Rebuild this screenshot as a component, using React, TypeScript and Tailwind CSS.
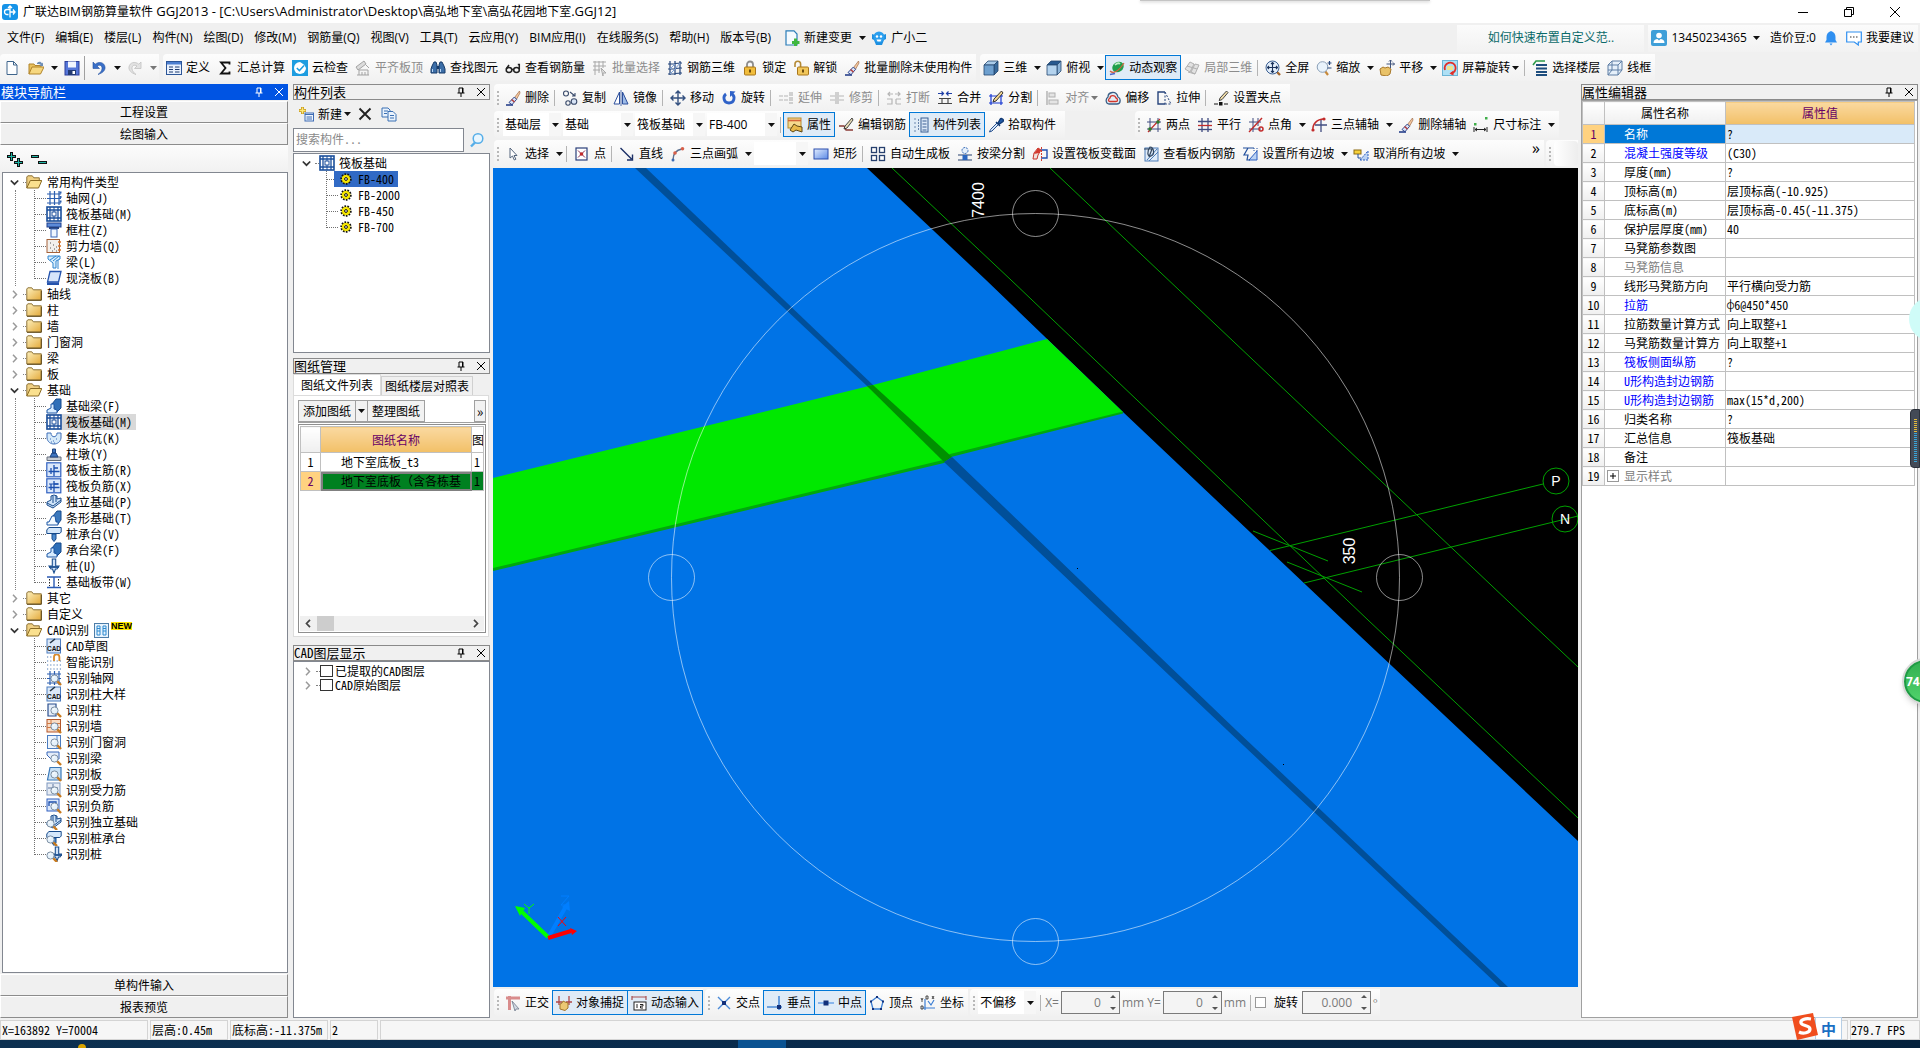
import React from 'react'

type IconName = keyof typeof icons

const magnifier = (
  <>
    <path d="M11 11l4 4" stroke="#c87a1e" strokeWidth="2.4" />
    <circle cx="8.5" cy="8.5" r="3.6" fill="#e6f2fb" stroke="#7d8fa3" />
    <path d="M6.8 8.2a2 2 0 0 1 2-1.6" stroke="#fff" fill="none" />
  </>
)

const brush = (
  <>
    <path d="M14.5 1l-5 6.5 2 1.8L15 3z" fill="#f4c9a0" stroke="#a06a48" strokeWidth=".7" />
    <path d="M9.4 7L4 12.5l3 2.2 4.6-5.4z" fill="#dbe4f7" stroke="#32498e" />
    <path d="M6.5 9.5l3 2.5" stroke="#b33b3b" strokeWidth="1.6" />
    <path d="M1 15h7" stroke="#27408b" strokeWidth="1.6" />
  </>
)

const slab = (
  <>
    <rect x="1" y="1" width="14" height="14" fill="#fff" stroke="#1b4f9c" strokeWidth="1.6" />
    <path d="M1 4h14M1 12h14M4 1v14M12 1v14" stroke="#1b4f9c" strokeWidth="1.3" />
    <rect x="6" y="6" width="4" height="4" fill="#fff" stroke="#1b4f9c" />
    <path d="M8 1v5M8 10v5" stroke="#1b4f9c" />
  </>
)

const beamShape = (
  <>
    <path d="M6 6l4-5h5v9l-4 4z" fill="#2f6fb8" stroke="#174a8b" />
    <path d="M1 15v-3l4-2V6h3v5l3 1v3z" fill="#d7ecff" stroke="#1d57a5" />
  </>
)

const pileCap = (
  <>
    <path d="M.8 4l2-2.5h12.4V6l-1.4 1.5H.8z" fill="#d4e7fb" stroke="#174a8b" />
    <path d="M6 8h4v5l-2 2.5L6 13z" fill="#4b8ad0" stroke="#174a8b" />
  </>
)

const pile = (
  <>
    <path d="M6.3 1h3.4v7H13l-2 3H9.500l-1.500 4L6.500 11H5L3 8h3.300z" fill="#cfe2f8" stroke="#1b4f8f" strokeWidth="1.1" />
    <path d="M3 9h10" stroke="#1b4f8f" strokeWidth="1.8" />
  </>
)

const footing = (
  <>
    <path d="M1 8l4-2v-4l3-1 3 1v3l4-1v4l-8 6-6-3z" fill="#cfe4f9" stroke="#184b8c" />
    <path d="M7 2v7M10 2v6M1 9l6 3 8-6" stroke="#184b8c" fill="none" />
  </>
)

const gridLines = <path d="M1 4h14M1 8.5h14M1 13h14M4 1v14M8.5 1v14M13 1v14" stroke="#2c5fb0" strokeWidth="1.2" />

const cube = (front: string, top: string, side: string) => (
  <>
    <path d="M1 5l4-4h10l-4 4z" fill={top} stroke="#24486e" strokeWidth=".8" />
    <path d="M11 5l4-4v10l-4 4z" fill={side} stroke="#24486e" strokeWidth=".8" />
    <path d="M1 5h10v10H1z" fill={front} stroke="#24486e" strokeWidth=".8" />
  </>
)

const rebarBox = (
  <>
    <rect x=".8" y=".8" width="14" height="14" fill="#dbe8fb" stroke="#2f5fc0" strokeWidth="1.2" />
    <path d="M2.5 9.5h11M8 3v11M8 6h4M5 6v6" stroke="#1b4fae" strokeWidth="1.3" fill="none" />
  </>
)

const icons = {
  newFile: <path d="M3 1.5h6.5L13 5v9.5H3zM9.5 1.5V5H13" fill="#fdfeff" stroke="#3f658c" />,
  open: (
    <>
      <path d="M1 14V4h5l1 1.5h6V8" fill="#e9c15c" stroke="#b1842b" />
      <path d="M1 14l3-7h12l-3.5 7z" fill="#f6d77f" stroke="#b1842b" />
      <path d="M9 3c2-2 4-1.5 5 .5l1-1V6h-3.5l1.2-1.2c-1-1-2-1-3.7-.8z" fill="#6d8db5" />
    </>
  ),
  save: (
    <>
      <rect x="1" y="1.5" width="14" height="13.5" fill="#5576d9" stroke="#2d3f9a" />
      <rect x="4" y="1.5" width="8" height="6" fill="#f2f6ff" />
      <rect x="4" y="10" width="8" height="5" fill="#233a72" />
      <rect x="8.5" y="11" width="2.5" height="3" fill="#fff" />
    </>
  ),
  undo: <path d="M2 2v6.5h6.5L6 6c3-2 5.500 0 5 3-.3 2-2 4-4 5.500C12 13 14.500 10 14 7 13.500 2.500 8 1 4.200 4.200z" fill="#3a70c8" stroke="#24519f" strokeWidth=".6" />,
  redo: <path d="M14 2v6.5H7.500L10 6C7 4 4.500 6 5 9c.3 2 2 4 4 5.500C4 13 1.500 10 2 7c.5-4.500 6-6 9.800-2.800z" fill="#e2e2e2" stroke="#c2c2c2" strokeWidth=".8" />,
  define: (
    <>
      <rect x=".5" y="1.5" width="15" height="13" fill="#e9f1fd" stroke="#2c5698" />
      <rect x="1" y="2" width="14" height="2.5" fill="#4d7fd0" />
      <path d="M3 7h4M3 9.5h4M3 12h4M9 7h4.5M9 9.5h4.5M9 12h4.5" stroke="#1f3c70" />
    </>
  ),
  sigma: <path d="M12.5 4.5v-2H4L8.5 8 4 13.5h8.500v-2" fill="none" stroke="#111" strokeWidth="1.8" />,
  cloud: (
    <>
      <rect width="16" height="16" fill="#1e9de0" />
      <path d="M8 2a6 6 0 1 0 6 6c-1-3-4-5-6-6z" fill="#fff" />
      <path d="M4.800 8l2.600 2.600 4.600-5" stroke="#1e9de0" strokeWidth="1.5" fill="none" />
    </>
  ),
  alignTop: (
    <>
      <path d="M1 7l8-6 2 3-8 6z" fill="#dcdcdc" stroke="#a3a3a3" />
      <path d="M4 15V10h9v5M7 15v-3M10 15v-3M2 15h12M11 5l3 3" stroke="#a3a3a3" fill="none" />
    </>
  ),
  binoculars: (
    <>
      <path d="M2 6l2-4h2l1 3v8H1V9zM14 6l-2-4h-2L9 5v8h6V9z" fill="#3c6ea8" stroke="#173b68" />
      <path d="M7 6h2v3H7z" fill="#173b68" />
      <path d="M2.5 12V9M10.500 12V9" stroke="#b9d6f5" />
    </>
  ),
  glasses: (
    <g fill="none" stroke="#222" strokeWidth="1.5">
      <ellipse cx="4" cy="10" rx="2.800" ry="2.400" />
      <ellipse cx="11.500" cy="10" rx="2.800" ry="2.400" />
      <path d="M6.800 9.500h2M1.200 9L4 5M14.300 9V4.500h-1.500" />
    </g>
  ),
  batchSelect: (
    <g stroke="#a8a8a8" fill="none">
      <path d="M1 2h13M1 6h13M1 10h7M3 1v14M7 1v12M11 1v7" />
      <path d="M9 8l5 5h-3v3z" fill="#e4e4e4" />
    </g>
  ),
  rebar3d: (
    <g stroke="#23447a" fill="none">
      <path d="M3 1v14M8 1v14M13 1v14M1 4l14-1M1 9l14-1M1 14l14-1" strokeWidth="1.2" />
      <path d="M3 14l5-5 5-6M3 9l5-5" stroke="#7ba1d8" />
    </g>
  ),
  lock: (
    <>
      <path d="M5 7V4.500a3 3 0 0 1 6 0V7" fill="none" stroke="#8d8d8d" strokeWidth="1.8" />
      <rect x="2.5" y="7" width="11" height="8" rx="1" fill="#f1bd3c" stroke="#a9761a" />
      <path d="M8 9.500v3" stroke="#5e3f08" strokeWidth="1.8" />
    </>
  ),
  unlock: (
    <>
      <path d="M2 7V4a2.800 2.800 0 0 1 5.600 0v3" fill="none" stroke="#b48a35" strokeWidth="1.6" />
      <rect x="4.5" y="7" width="11" height="8" rx="1" fill="#f1c65a" stroke="#a9761a" />
      <path d="M10 9.500v3" stroke="#5e3f08" strokeWidth="1.8" />
    </>
  ),
  brush,
  cube: cube('#6ea0cf', '#a9cbe9', '#386a9c'),
  cubeTop: cube('#b4d3ee', '#27598f', '#8cb4d9'),
  orbit: (
    <>
      <ellipse cx="9" cy="7" rx="6" ry="5" fill="#1f9f4c" transform="rotate(-35 9 7)" />
      <path d="M6 5c2-2 4-2 5-1" stroke="#bff0c8" strokeWidth="1.6" fill="none" />
      <path d="M1 11c3 3 8 1 14-8" stroke="#d4603a" strokeWidth="1.2" fill="none" />
      <path d="M1 14.500l5-1" stroke="#4b66c9" strokeWidth="1.4" />
    </>
  ),
  localCube: (
    <g fill="#e2e2e2" stroke="#b0b0b0">
      <path d="M1 9l5-7 4 2-4 8zM7 12l4-8 4 1-4 9zM3 6l10 3M4 12l7 2" />
    </g>
  ),
  fit: (
    <>
      <path d="M12 12l3 3" stroke="#a3652b" strokeWidth="2.4" />
      <circle cx="7.5" cy="7.5" r="6.5" fill="#e4effb" stroke="#3b5f92" />
      <path d="M7.500 2.500v10M2.500 7.500h10M6 4l1.500-1.500L9 4M6 11l1.500 1.500L9 11M4 6L2.500 7.500 4 9M11 6l1.500 1.500L11 9" stroke="#1c335c" fill="none" strokeWidth="1.1" />
    </>
  ),
  zoom: (
    <>
      <path d="M9 11l3 4" stroke="#c88a3b" strokeWidth="2.2" />
      <circle cx="6.5" cy="7" r="5.3" fill="#e9f3fc" stroke="#8ba0b8" />
      <path d="M13.500 1v4M11.500 3h4M11.500 8h4" stroke="#28497e" strokeWidth="1.2" />
    </>
  ),
  pan: (
    <>
      <path d="M2 15l-1-6 3-2 2 1 3-1 3 2-1 5-3 2z" fill="#e9c268" stroke="#a8792b" />
      <path d="M11.500 0v8M7.500 4h8M10 1.500L11.500 0 13 1.500M14 2.500L15.500 4 14 5.500" stroke="#40547c" fill="none" />
    </>
  ),
  screenRotate: (
    <>
      <rect x=".5" y=".5" width="15" height="15" fill="#aee0f5" stroke="#6cb5d6" />
      <path d="M3 10a5.500 5.500 0 1 1 6 3.500" stroke="#e02e28" strokeWidth="1.8" fill="none" />
      <rect x="5" y="6" width="6" height="4" fill="#f1e28b" />
      <path d="M11.500 10.500l-4 3 4 2z" fill="#e02e28" />
    </>
  ),
  floors: (
    <>
      <path d="M4 5h11M4 8.500h11M4 12h11M4 15h11" stroke="#1e4e7e" strokeWidth="1.8" />
      <path d="M1 5l3-4h9" stroke="#2d9a4a" strokeWidth="1.6" fill="none" />
    </>
  ),
  wire: (
    <g fill="#e6f0fa" stroke="#5f7fa5">
      <path d="M1 5l4-4h10v9l-4 5H1z" />
      <path d="M1 5h10v10M11 5l4-4M5 1v9H1M5 10h10M5 10l-4 5" fill="none" />
    </g>
  ),
  copy: (
    <g fill="none" stroke="#3a4b6b" strokeWidth="1.1">
      <circle cx="4" cy="3.5" r="2.5" />
      <circle cx="12" cy="11.5" r="2.8" fill="#d8e4f6" />
      <circle cx="6" cy="13" r="2.2" />
      <path d="M8 2l5 4M13 3v3h-3" />
    </g>
  ),
  mirror: (
    <>
      <path d="M6.500 2v12H1z" fill="#fff" stroke="#2c4f9c" />
      <path d="M9.500 2v12H15z" fill="#9dbbe8" stroke="#2c4f9c" />
      <path d="M8 0v16" stroke="#2c4f9c" strokeWidth=".8" />
    </>
  ),
  move: <path d="M8 1v14M1 8h14M5.500 3.500L8 1l2.500 2.500M5.500 12.500L8 15l2.500-2.500M3.500 5.500L1 8l2.500 2.500M12.500 5.500L15 8l-2.500 2.500" stroke="#33507f" strokeWidth="1.4" fill="none" />,
  rotate: (
    <>
      <path d="M5 4C1.500 6.500 2.500 13 8 13s6.500-6.500 3-9" stroke="#2f62c8" strokeWidth="2.8" fill="none" />
      <path d="M14.500 1.500L9 1v6z" fill="#2f62c8" />
    </>
  ),
  extend: <path d="M1 6h9M1 10h9M12 2v12M14 2v12" stroke="#b5b5b5" strokeWidth="1.2" strokeDasharray="4 1" />,
  trim: <path d="M1 6h5M1 10h5M10 6h5M10 10h5M7 2v12M9 2v12" stroke="#b5b5b5" strokeWidth="1.2" />,
  breakAt: <path d="M2 4h5M9 4h5M4 2L2 4l2 2M12 2l2 2-2 2M1 9h5v5H1M10 9h5M10 14h5M10 9v5" stroke="#b5b5b5" strokeWidth="1.2" fill="none" />,
  merge: (
    <>
      <path d="M1 3.500h5M10 3.500h5M4.500 1.500l2 2-2 2M11.500 1.500l-2 2 2 2" stroke="#1f3fa6" strokeWidth="1.2" fill="none" />
      <path d="M2 8.500h12M5 8.500v5M11 8.500v5M1 13.500h14" stroke="#444" strokeWidth="1.1" />
    </>
  ),
  split: (
    <>
      <path d="M1 6h14M1 13h14M3 4v11M13 4v11" stroke="#1737d2" strokeWidth="1.2" />
      <path d="M13.500 1L6 9l-1 3 3-1 7-8z" fill="#f1d491" stroke="#222" strokeWidth=".9" />
    </>
  ),
  align: (
    <g stroke="#b0b0b0" fill="#e4e4e4">
      <path d="M2 1v14" strokeWidth="1.4" />
      <rect x="4" y="3" width="6" height="4" />
      <rect x="4" y="10" width="9" height="4" />
    </g>
  ),
  offset: (
    <g fill="none">
      <path d="M4 14c-3 0-4-5-1-7 0-5 8-7 10 0 3 1 3 7-1 7z" stroke="#3a5f86" strokeWidth="1.3" fill="#e4edf5" />
      <path d="M5 11.500c-2 0-2-2.500 0-3.500 0-3 5-3.500 6 0 2 .5 2 3.500 0 3.500z" stroke="#d2352a" strokeWidth="1.3" />
    </g>
  ),
  stretch: (
    <>
      <path d="M9 2H2v12h7" stroke="#27447c" strokeWidth="1.4" fill="none" />
      <path d="M9 2v12M9 2l6 12H9" stroke="#27447c" strokeDasharray="2 1.5" fill="none" />
    </>
  ),
  grips: (
    <>
      <path d="M1 14h4M11 14h4" stroke="#111" strokeWidth="1.2" />
      <rect x="6" y="12" width="3.5" height="3.5" fill="#111" />
      <path d="M13.500 1L7 8l-.8 2.600L9 9.600l6-7z" fill="#f0dca8" stroke="#333" strokeWidth=".9" />
    </>
  ),
  props: (
    <>
      <rect x="1" y="1" width="13" height="10" fill="#f5d98e" stroke="#b98a2a" />
      <path d="M1 3.500h13" stroke="#d5633a" strokeWidth="1.6" />
      <path d="M3 13l4-6 3 2 5 1v5l-6-2-3 2z" fill="#e8b94b" stroke="#5e4714" />
    </>
  ),
  editRebar: (
    <>
      <path d="M1 9h5l2 4h7" stroke="#8a3a35" strokeWidth="1.3" fill="none" />
      <path d="M14 1L7 9l-1 3 3-1 6-8z" fill="#e9ddb8" stroke="#333" strokeWidth=".9" />
    </>
  ),
  listPane: (
    <>
      <rect x="8" y="1" width="7" height="14" fill="#dce8f7" stroke="#3a5f92" />
      <path d="M9.500 4h4M9.500 7h4M9.500 10h4M9.500 13h4" stroke="#3a5f92" />
      <path d="M1 2h3M1 6h3M1 10h3M1 14h3M5.500 2v12" stroke="#6b87ae" strokeDasharray="2 1" />
    </>
  ),
  picker: (
    <>
      <path d="M9 6L2.500 12.500 1.500 15l2.500-1 6.500-6.500" fill="#d5e6fa" stroke="#27508e" />
      <path d="M8 5l4 4M10 6l2-3.500a1.800 1.800 0 0 1 3 2L11.500 7z" fill="#225ca8" stroke="#123a74" strokeWidth="1.4" />
    </>
  ),
  twoPoint: (
    <>
      <path d="M1 5h14M1 12h14M4 1v14M12 1v14" stroke="#404c80" />
      <path d="M2 15L14 2" stroke="#c22b2b" strokeWidth="1.2" />
      <circle cx="12" cy="5" r="1.8" fill="#2c7a2c" />
      <circle cx="4" cy="12" r="1.8" fill="#2c7a2c" />
    </>
  ),
  parallel: (
    <>
      <path d="M5 1v14M11 1v14M1 4.500h14" stroke="#404c80" strokeWidth="1.3" />
      <path d="M1 8.500h14" stroke="#c22b2b" strokeWidth="1.3" />
      <path d="M1 12.500h14" stroke="#404c80" strokeWidth="1.3" />
    </>
  ),
  pointAngle: (
    <>
      <path d="M1 5h12M1 12h12M5 1v14M10 1v8" stroke="#404c80" />
      <path d="M1 15L14 1" stroke="#c22b2b" strokeWidth="1.4" />
      <circle cx="13" cy="12" r="2" fill="none" stroke="#c22b2b" strokeWidth="1.5" />
    </>
  ),
  arcAxis: (
    <>
      <path d="M4 8h12M10 3v12" stroke="#404c80" strokeWidth="1.3" />
      <path d="M2 14C1 7 6 2 13 2" stroke="#c22b2b" strokeWidth="1.5" fill="none" />
      <circle cx="2" cy="13" r="1.6" fill="#c22b2b" />
      <circle cx="13" cy="2" r="1.6" fill="#c22b2b" />
    </>
  ),
  dim: (
    <>
      <path d="M1 10v5M14 10v5M2 12.500h11M4 11l-2 1.500L4 14M11 11l2 1.500-2 1.500" stroke="#222" fill="none" />
      <rect x="1" y="6" width="2.5" height="2.5" fill="#3fae49" />
      <rect x="12" y="0" width="2.5" height="2.5" fill="#3fae49" />
    </>
  ),
  cursor: <path d="M5 2v10l2.500-2 1.800 4 1.600-.8L9 9.500h3z" fill="#fff" stroke="#55657c" />,
  point: (
    <>
      <rect x="2" y="2" width="11" height="12" fill="#fff" stroke="#2a3f7a" strokeWidth="1.2" />
      <path d="M4 4.500l7 7M11 4.500l-7 7" stroke="#8a2a50" />
      <circle cx="7.5" cy="8" r="1.8" fill="#c22b2b" />
    </>
  ),
  line: <path d="M1.500 2l11 11M13.500 8.500v5.500H8" stroke="#1b2f66" strokeWidth="1.4" fill="none" />,
  arc: (
    <>
      <path d="M3 14C3 8 6 4 12 3" stroke="#5c7190" strokeWidth="1.4" fill="none" />
      <circle cx="12.5" cy="2.8" r="1.8" fill="#d7604a" />
      <circle cx="5" cy="7" r="1.8" fill="#d7604a" />
      <circle cx="3" cy="14" r="1.5" fill="#3a68b0" />
    </>
  ),
  rect: (
    <>
      <defs>
        <linearGradient id="rectFill" x1="0" y1="0" x2="1" y2="1">
          <stop offset="0" stopColor="#e2edff" />
          <stop offset="1" stopColor="#5c8ae6" />
        </linearGradient>
      </defs>
      <rect x="1" y="3" width="14" height="10" fill="url(#rectFill)" stroke="#2c4fae" />
    </>
  ),
  autoSlab: (
    <g fill="#fff" stroke="#27406e" strokeWidth="1.3">
      <rect x="1.5" y="1.5" width="5" height="5" />
      <rect x="9.5" y="1.5" width="5" height="5" />
      <rect x="1.5" y="9.5" width="5" height="5" />
      <rect x="9.5" y="9.5" width="5" height="5" />
    </g>
  ),
  beamSplit: (
    <>
      <circle cx="8" cy="4.5" r="3" fill="#e6f0fb" stroke="#2e65b5" strokeDasharray="2 1" />
      <path d="M1 9h14M1 14h14" stroke="#27406e" strokeWidth="1.2" />
      <rect x="5.5" y="9" width="5" height="5" fill="#2b66c0" />
    </>
  ),
  section: (
    <>
      <path d="M9 4h6v8H9" fill="none" stroke="#1f4db0" strokeWidth="1.4" />
      <path d="M9.500 1v14" stroke="#d43a2f" strokeDasharray="2 1" />
      <path d="M1 13l1-6 4-5 3 2-3 5-1 4z" fill="#f0e3dd" stroke="#c8352c" />
      <path d="M2 8l4-6 3 2-2 3z" fill="#d43a2f" />
    </>
  ),
  viewRebar: (
    <>
      <rect x="2" y="2" width="13" height="13" fill="#e0ebf8" stroke="#4c7db8" />
      <path d="M4 14L14 3M6 15l9-9" stroke="#4c7db8" />
      <path d="M1 3h8l-3 8M7 1c4 0 5 8 1 9S4 5 7 1z" fill="none" stroke="#33475f" strokeWidth="1.2" />
    </>
  ),
  slopeSet: (
    <>
      <path d="M7 14h8V5z" fill="#bcd3f3" stroke="#2c5ec0" />
      <path d="M1 2h11M6 2L2 9h4l-1 5h3" stroke="#214f9c" strokeWidth="1.2" fill="none" />
      <path d="M12 2v3M15 2v3" stroke="#214f9c" strokeDasharray="1 1" />
    </>
  ),
  slopeClear: (
    <>
      <path d="M7 14h8V5z" fill="#bcd3f3" stroke="#2c5ec0" strokeDasharray="2 1" />
      <rect x="1" y="4" width="7" height="4" fill="#f6d13a" stroke="#8b6b12" />
      <path d="M5 8v4h3" stroke="#214f9c" fill="none" />
    </>
  ),
  ortho: (
    <>
      <path d="M1 3h14M4.500 1v14" stroke="#d98c8c" strokeWidth="3" />
      <path d="M7 6l7 8h-3l-1 2z" fill="#d3dae4" stroke="#7a8494" strokeWidth=".9" />
    </>
  ),
  snap: (
    <>
      <path d="M3 1v9M13 1v9M0 7h6M10 7h6" stroke="#b04848" strokeWidth="1.3" />
      <path d="M4 14V9l2-1 1-2 2 1 3 1v5l-3 2.500z" fill="#ecc873" stroke="#a3752a" />
    </>
  ),
  dynInput: (
    <>
      <path d="M1 2h14M1 1v4M15 1v4" stroke="#a85050" strokeWidth="1.2" />
      <rect x="3" y="7" width="12" height="8" fill="#fff" stroke="#222" />
      <path d="M6 9v4M9 9.500h3v1.600H9.500V13H12" stroke="#222" fill="none" />
    </>
  ),
  cross: (
    <>
      <path d="M2 2l12 12M14 2L2 14" stroke="#4a8ad8" strokeWidth="1.4" />
      <rect x="6" y="6" width="4" height="4" fill="#12307a" />
    </>
  ),
  perp: (
    <>
      <path d="M0 12h15M12 1v14" stroke="#4a8ad8" strokeWidth="1.6" />
      <rect x="10" y="10" width="4" height="4" fill="#12307a" />
    </>
  ),
  mid: (
    <>
      <path d="M0 8h16" stroke="#7fb0ea" strokeWidth="1.8" />
      <rect x="5.5" y="5.5" width="5" height="5" fill="#12307a" />
    </>
  ),
  vertex: (
    <>
      <path d="M8 2l6 4.500-2 7.500H4L2 6.500z" fill="none" stroke="#3d7fd4" strokeWidth="1.3" />
      <path d="M7 1h2v2H7zM13 5.500h2v2h-2zM1 5.500h2v2H1zM3 13h2v2H3zM11 13h2v2h-2z" fill="#12307a" />
    </>
  ),
  coord: (
    <>
      <path d="M5 4v11M3 13h12M8 6l3 4 3-5" stroke="#3d7fd4" strokeWidth="1.2" fill="none" />
      <path d="M1 3l1 2 1-2M2 5v2M1 11h2v3H1zM6 1h2v3H6zM12 1l2 3M14 1l-2 3" stroke="#222" strokeWidth=".8" fill="none" />
    </>
  ),
  folder: (
    <>
      <defs>
        <linearGradient id="folderFill" x1="0" y1="0" x2="1" y2="1">
          <stop offset="0" stopColor="#fdf0bd" />
          <stop offset="1" stopColor="#e3a93a" />
        </linearGradient>
      </defs>
      <path d="M.8 14V3l1-1.200h4l1.500 2h8v10.200z" fill="url(#folderFill)" stroke="#8e7238" />
      <path d="M1 14.300h14.300V5" stroke="#5f4a1c" fill="none" />
    </>
  ),
  folderOpen: (
    <>
      <path d="M.8 14V3l1-1.200h4.500l1.500 2h5.500V7" fill="#f0d083" stroke="#8e7238" />
      <path d="M.8 14l3.500-7.500h11.500L12.500 14z" fill="#fae08e" stroke="#8a6a22" />
    </>
  ),
  axisGrid: (
    <>
      {gridLines}
      <path d="M13.500 2.500h2M13.500 7h2M13.500 11.500h2" stroke="#2c5fb0" strokeWidth="2" />
    </>
  ),
  slab,
  column: (
    <>
      <rect x="1" y="1" width="14" height="4" fill="#5b8ad8" stroke="#1f3f8c" />
      <path d="M3 5h10v2H3z" fill="#24407c" />
      <rect x="5" y="7" width="6" height="8" fill="#eef5ff" stroke="#3a66b8" />
    </>
  ),
  wall: (
    <>
      <rect x="1" y="1.5" width="12.5" height="13" fill="#f3f0ec" stroke="#a5623a" />
      <path d="M12 4h3M12 8h3M12 12h3" stroke="#d77428" strokeWidth="1.6" />
      <path d="M4 5h1M7 7h1M4 10h1M8 11h1M6 13h1M10 9h1M10 13h1" stroke="#555" />
    </>
  ),
  beam: (
    <g stroke="#2f84cf" fill="#d6ecfb">
      <path d="M2 2h12v3l-4 2v7H7V9L2 5zM7 7l6-5M4 6l6-4" />
      <path d="M12 6v9" />
    </g>
  ),
  plate: (
    <>
      <path d="M4 1.500h11L12.500 12H1.500z" fill="#d7e5fa" stroke="#2453ad" strokeWidth="1.3" />
      <path d="M1 12.500h12v2.500H1z" fill="#2453ad" />
    </>
  ),
  foundationBeam: beamShape,
  pit: (
    <>
      <path d="M1 3h4c0 5 6 5 6 0h4v5c-1 8-13 8-14 0z" fill="#d6eafa" stroke="#3f6fb8" />
      <path d="M4 9h1M7 11h1M10 9h1M8 13h1M5 12h1" stroke="#3f6fb8" />
    </>
  ),
  pier: (
    <>
      <path d="M1 11h14v3.500H1z" fill="#c8cdd4" stroke="#666f7c" />
      <path d="M4 11l2-4h4l2 4zM6.500 7V3h3v4z" fill="#3e74bf" stroke="#1c437f" />
    </>
  ),
  rebarMain: rebarBox,
  rebarNeg: (
    <>
      {rebarBox}
      <path d="M3 6h10" stroke="#1b4fae" />
    </>
  ),
  footing,
  strip: (
    <>
      <path d="M7 6l4-5h4v9l-3 4z" fill="#3b78bd" stroke="#174a8b" />
      <path d="M1 15v-3h2l3-6h3l1 6h2v3z" fill="#f4faff" stroke="#1d57a5" />
    </>
  ),
  pileCap,
  pile,
  band: (
    <>
      <path d="M1 3h14M1 13.500h14M8 3v10" stroke="#2b5bb4" strokeWidth="1.4" />
      <path d="M3.500 5v7M12.500 5v7" stroke="#222" strokeDasharray="1.5 1.5" />
    </>
  ),
  cad: (
    <>
      <rect x="1" y="1" width="13.5" height="14" fill="#dbe8f8" stroke="#4b7cc0" />
      <path d="M4 5l5-4" stroke="#234" strokeWidth="1.6" />
      <text x="8" y="12.5" fontSize="6.5" fontWeight="700" fontFamily="Liberation Sans, sans-serif" textAnchor="middle" fill="#111">CAD</text>
    </>
  ),
  smart: (
    <>
      <path d="M1 3h6M1 7h14M1 11h14M1 15h14" stroke="#4d78b5" strokeWidth="1.2" strokeDasharray="1.2 2" />
      <path d="M8 7V3a2.700 2.700 0 0 1 5.400 0v4" stroke="#d98a2a" strokeWidth="1.8" fill="none" />
    </>
  ),
  idGrid: (
    <>
      {gridLines}
      {magnifier}
    </>
  ),
  idColumn: (
    <>
      <path d="M2 2h8v12H2z" fill="#e4edf9" stroke="#2b4f8e" strokeWidth="1.2" />
      {magnifier}
    </>
  ),
  idWall: (
    <>
      <rect x="1" y="1.5" width="13.5" height="12.5" fill="#f9dcc4" stroke="#b3562a" />
      <path d="M1 5.500h13M1 9.500h13M5 1.500v4M10 5.500v4" stroke="#d07a45" />
      {magnifier}
    </>
  ),
  idDoor: (
    <>
      <rect x="1.5" y="1.5" width="13" height="13" fill="#eef5fc" stroke="#4b7cc0" />
      <path d="M11 2v12" stroke="#9fc0e8" strokeWidth="2" />
      {magnifier}
    </>
  ),
  idBeam: (
    <>
      <path d="M1 2h12v7H5L1 5z" fill="#e4edf9" stroke="#3766b8" />
      {magnifier}
    </>
  ),
  idPlate: (
    <>
      <path d="M4 1.500h11v12.500H1.500z" fill="#c9e2f7" stroke="#3a78b8" strokeWidth="1.2" />
      {magnifier}
    </>
  ),
  idRebar: (
    <>
      <rect x="1" y="1" width="13" height="12" fill="#e7ecf4" stroke="#7c95bd" />
      <path d="M2 6h10M7 2v8" stroke="#5c76a3" />
      {magnifier}
    </>
  ),
  idNeg: (
    <>
      <rect x="1" y="1" width="12" height="12" fill="#dbe8fb" stroke="#2f5fc0" />
      <path d="M3 8V4h7v4" stroke="#1b4fae" fill="none" strokeWidth="1.3" />
      {magnifier}
    </>
  ),
  idFooting: (
    <>
      {footing}
      <g transform="translate(-4 1)">{magnifier}</g>
    </>
  ),
  idCap: (
    <>
      {pileCap}
      <g transform="translate(-4 1)">{magnifier}</g>
    </>
  ),
  idPile: (
    <>
      <g transform="translate(3 0)">{pile}</g>
      <g transform="translate(-4 1)">{magnifier}</g>
    </>
  ),
  gear: (
    <>
      <circle cx="8" cy="8" r="4.6" fill="#f5e600" stroke="#111" strokeWidth="2.2" strokeDasharray="1.6 1.2" />
      <circle cx="8" cy="8" r="4" fill="#f5e600" />
      <circle cx="8" cy="8" r="1.4" fill="#fff" stroke="#111" />
    </>
  ),
  create: (
    <>
      <path d="M4.500 1v7M1 4.500h7" stroke="#c69a1c" strokeWidth="3" />
      <path d="M4.500 1.500v6M1.500 4.500h6" stroke="#ffe877" strokeWidth="1.4" />
      <rect x="7" y="7" width="8.5" height="8" fill="#eef4fd" stroke="#3f6cb5" />
      <path d="M7 8.500h8.500M8.500 11h5.500M8.500 13h5.500" stroke="#3f6cb5" />
    </>
  ),
  remove: <path d="M2.500 2.500l11 11M13.500 2.500l-11 11" stroke="#222" strokeWidth="1.9" />,
  duplicate: (
    <g fill="#e9f2fc" stroke="#3b70b4">
      <path d="M1 2h6l2 2v7H1z" />
      <path d="M7 5.500h5l3 3V15H7zM9 9.500h4M9 12h4M3 5h4M3 7.500h3" />
    </g>
  ),
  search: (
    <>
      <path d="M6 10.500L2 14.500" stroke="#56aee8" strokeWidth="2.4" />
      <circle cx="9" cy="6.5" r="4.8" fill="#e8f6ff" stroke="#56aee8" strokeWidth="1.5" />
    </>
  ),
  change: (
    <>
      <path d="M2 .8h8L13 4v11H2z" fill="#f5fafe" stroke="#2b7db8" strokeWidth="1.2" />
      <path d="M10 8.500h3v2.500h2.500v3H13V16h-3v-2H8v-3h2z" fill="#3fb73f" />
    </>
  ),
  robot: (
    <>
      <path d="M1 4l3 1h8l3-1v5l-2 1-2 5H5l-2-5-2-1z" fill="#1d8fe0" />
      <circle cx="8" cy="7" r="5.5" fill="#2c9fee" />
      <circle cx="6" cy="6.5" r="1.2" fill="#fff" />
      <circle cx="10" cy="6.5" r="1.2" fill="#fff" />
      <path d="M5.500 9.500h5l-1 2h-3z" fill="#fff" />
    </>
  ),
  user: (
    <>
      <rect width="16" height="16" rx="2" fill="#3f9fd8" />
      <circle cx="8" cy="5.5" r="2.8" fill="#fff" />
      <path d="M2.500 13c0-3 2-4 4-4l1.500 1.500L9.500 9c2 0 4 1 4 4z" fill="#fff" />
    </>
  ),
  bell: (
    <>
      <path d="M8 1c3 1 4.500 3 4.500 6v3l1.500 2.500H2L3.500 10V7C3.500 4 5 2 8 1z" fill="#2f8ff0" />
      <path d="M6.500 13.500h3L8 15.500z" fill="#2f8ff0" />
    </>
  ),
  feedback: (
    <>
      <path d="M.7 2h14.600v10h-3v3l-4-3H.7z" fill="#fff" stroke="#2f8ff0" strokeWidth="1.2" />
      <path d="M4 7h8" stroke="#333" strokeWidth="1.2" strokeDasharray="1.5 1.5" />
    </>
  ),
}

const Icon: React.FC<{ name: IconName }> = ({ name }) => (
  <svg viewBox="0 0 16 16" className="h-4 w-4 shrink-0" fill="none" aria-hidden="true">
    {icons[name]}
  </svg>
)

const Caret: React.FC<{ muted?: boolean }> = ({ muted }) => (
  <svg viewBox="0 0 7 4" className="h-1 w-[7px] shrink-0" aria-hidden="true">
    <path d="M0 0h7L3.5 4z" fill={muted ? '#777' : '#111'} />
  </svg>
)

interface ToolItem {
  label: string
  icon?: IconName
  active?: boolean
  disabled?: boolean
  arrow?: 'wide' | 'narrow'
  sep?: boolean
}

const Tool: React.FC<ToolItem> = ({ label, icon, active, disabled, arrow, sep }) => (
  <>
    <button
      type="button"
      disabled={disabled}
      className={`-ml-px flex h-[25px] shrink-0 items-center gap-1 border px-[3px] whitespace-nowrap ${
        active ? 'relative border-[#0078d7] bg-[#dfebf7]' : 'border-transparent'
      } ${disabled ? 'text-[#8c8c8c]' : ''}`}
    >
      {icon && <Icon name={icon} />}
      {label}
      {arrow === 'narrow' && <span className="-ml-0.5"><Caret muted={disabled} /></span>}
    </button>
    {arrow === 'wide' && (
      <button type="button" aria-label={`${label} 选项`} className="flex h-[25px] w-3 shrink-0 items-center justify-center">
        <Caret />
      </button>
    )}
    {sep && <span className="mr-1 ml-px h-4 w-px shrink-0 bg-[#b4b4b4]" />}
  </>
)

const Grip: React.FC = () => (
  <svg viewBox="0 0 2 14" className="mr-[3px] ml-[3px] h-[14px] w-[2px] shrink-0" aria-hidden="true">
    <path d="M0 0h2v2H0zM0 4h2v2H0zM0 8h2v2H0zM0 12h2v2H0z" fill="#b8b8b8" />
  </svg>
)

const Group: React.FC<{ children: React.ReactNode; className?: string }> = ({ children, className = '' }) => (
  <div className={`flex h-[27px] shrink-0 items-center rounded-l-sm bg-gradient-to-b from-[#fdfdfd] to-[#f1f1f1] ${className}`}>
    {children}
  </div>
)

const Combo: React.FC<{ label: string; value: string; className: string }> = ({ label, value, className }) => (
  <span className={`relative flex h-[23px] shrink-0 items-center bg-white ${className}`}>
    <select aria-label={label} className="h-full w-full appearance-none bg-transparent pl-0.5 outline-none">
      <option>{value}</option>
    </select>
    <span className="pointer-events-none absolute right-0 flex h-full w-3 items-center justify-center bg-[#f6f6f6]">
      <Caret />
    </span>
  </span>
)

const menus = [
  '文件(F)', '编辑(E)', '楼层(L)', '构件(N)', '绘图(D)', '修改(M)', '钢筋量(Q)', '视图(V)',
  '工具(T)', '云应用(Y)', 'BIM应用(I)', '在线服务(S)', '帮助(H)', '版本号(B)',
]

const mainTools: ToolItem[] = [
  { label: '定义', icon: 'define' },
  { label: '汇总计算', icon: 'sigma' },
  { label: '云检查', icon: 'cloud' },
  { label: '平齐板顶', icon: 'alignTop', disabled: true },
  { label: '查找图元', icon: 'binoculars' },
  { label: '查看钢筋量', icon: 'glasses' },
  { label: '批量选择', icon: 'batchSelect', disabled: true },
  { label: '钢筋三维', icon: 'rebar3d' },
  { label: '锁定', icon: 'lock' },
  { label: '解锁', icon: 'unlock' },
  { label: '批量删除未使用构件', icon: 'brush' },
]

const viewTools: ToolItem[] = [
  { label: '三维', icon: 'cube', arrow: 'wide' },
  { label: '俯视', icon: 'cubeTop', arrow: 'wide' },
  { label: '动态观察', icon: 'orbit', active: true },
  { label: '局部三维', icon: 'localCube', disabled: true, sep: true },
  { label: '全屏', icon: 'fit' },
  { label: '缩放', icon: 'zoom', arrow: 'wide' },
  { label: '平移', icon: 'pan', arrow: 'wide' },
  { label: '屏幕旋转', icon: 'screenRotate', arrow: 'narrow', sep: true },
  { label: '选择楼层', icon: 'floors' },
  { label: '线框', icon: 'wire' },
]

const editTools: ToolItem[] = [
  { label: '删除', icon: 'brush', sep: true },
  { label: '复制', icon: 'copy' },
  { label: '镜像', icon: 'mirror', sep: true },
  { label: '移动', icon: 'move' },
  { label: '旋转', icon: 'rotate', sep: true },
  { label: '延伸', icon: 'extend', disabled: true },
  { label: '修剪', icon: 'trim', disabled: true, sep: true },
  { label: '打断', icon: 'breakAt', disabled: true },
  { label: '合并', icon: 'merge' },
  { label: '分割', icon: 'split', sep: true },
  { label: '对齐', icon: 'align', disabled: true, arrow: 'narrow' },
  { label: '偏移', icon: 'offset' },
  { label: '拉伸', icon: 'stretch', sep: true },
  { label: '设置夹点', icon: 'grips' },
]

const componentTools: ToolItem[] = [
  { label: '属性', icon: 'props', active: true },
  { label: '编辑钢筋', icon: 'editRebar' },
  { label: '构件列表', icon: 'listPane', active: true },
  { label: '拾取构件', icon: 'picker' },
]

const axisTools: ToolItem[] = [
  { label: '两点', icon: 'twoPoint' },
  { label: '平行', icon: 'parallel' },
  { label: '点角', icon: 'pointAngle', arrow: 'wide' },
  { label: '三点辅轴', icon: 'arcAxis', arrow: 'wide' },
  { label: '删除辅轴', icon: 'brush' },
  { label: '尺寸标注', icon: 'dim', arrow: 'wide' },
]

const drawTools: ToolItem[] = [
  { label: '选择', icon: 'cursor', arrow: 'wide', sep: true },
  { label: '点', icon: 'point', sep: true },
  { label: '直线', icon: 'line' },
  { label: '三点画弧', icon: 'arc', arrow: 'wide' },
]

const slabTools: ToolItem[] = [
  { label: '矩形', icon: 'rect', sep: true },
  { label: '自动生成板', icon: 'autoSlab' },
  { label: '按梁分割', icon: 'beamSplit' },
  { label: '设置筏板变截面', icon: 'section' },
  { label: '查看板内钢筋', icon: 'viewRebar' },
  { label: '设置所有边坡', icon: 'slopeSet', arrow: 'wide' },
  { label: '取消所有边坡', icon: 'slopeClear', arrow: 'wide' },
]

const modeTools: ToolItem[] = [
  { label: '正交', icon: 'ortho' },
  { label: '对象捕捉', icon: 'snap', active: true },
  { label: '动态输入', icon: 'dynInput', active: true },
]

const snapTools: ToolItem[] = [
  { label: '交点', icon: 'cross' },
  { label: '垂点', icon: 'perp', active: true },
  { label: '中点', icon: 'mid', active: true },
  { label: '顶点', icon: 'vertex' },
  { label: '坐标', icon: 'coord' },
]

interface TreeGroup {
  label: string
  isNew?: boolean
  items?: [string, IconName][]
}

const tree: TreeGroup[] = [
  {
    label: '常用构件类型',
    items: [
      ['轴网(J)', 'axisGrid'],
      ['筏板基础(M)', 'slab'],
      ['框柱(Z)', 'column'],
      ['剪力墙(Q)', 'wall'],
      ['梁(L)', 'beam'],
      ['现浇板(B)', 'plate'],
    ],
  },
  { label: '轴线' },
  { label: '柱' },
  { label: '墙' },
  { label: '门窗洞' },
  { label: '梁' },
  { label: '板' },
  {
    label: '基础',
    items: [
      ['基础梁(F)', 'foundationBeam'],
      ['筏板基础(M)', 'slab'],
      ['集水坑(K)', 'pit'],
      ['柱墩(Y)', 'pier'],
      ['筏板主筋(R)', 'rebarMain'],
      ['筏板负筋(X)', 'rebarNeg'],
      ['独立基础(P)', 'footing'],
      ['条形基础(T)', 'strip'],
      ['桩承台(V)', 'pileCap'],
      ['承台梁(F)', 'foundationBeam'],
      ['桩(U)', 'pile'],
      ['基础板带(W)', 'band'],
    ],
  },
  { label: '其它' },
  { label: '自定义' },
  {
    label: 'CAD识别',
    isNew: true,
    items: [
      ['CAD草图', 'cad'],
      ['智能识别', 'smart'],
      ['识别轴网', 'idGrid'],
      ['识别柱大样', 'cad'],
      ['识别柱', 'idColumn'],
      ['识别墙', 'idWall'],
      ['识别门窗洞', 'idDoor'],
      ['识别梁', 'idBeam'],
      ['识别板', 'idPlate'],
      ['识别受力筋', 'idRebar'],
      ['识别负筋', 'idNeg'],
      ['识别独立基础', 'idFooting'],
      ['识别桩承台', 'idCap'],
      ['识别桩', 'idPile'],
    ],
  },
]

const properties: { name: string; value: string; tone?: 'blue' | 'gray' }[] = [
  { name: '名称', value: '?' },
  { name: '混凝土强度等级', value: '(C30)', tone: 'blue' },
  { name: '厚度(mm)', value: '?' },
  { name: '顶标高(m)', value: '层顶标高(-10.925)' },
  { name: '底标高(m)', value: '层顶标高-0.45(-11.375)' },
  { name: '保护层厚度(mm)', value: '40' },
  { name: '马凳筋参数图', value: '' },
  { name: '马凳筋信息', value: '', tone: 'gray' },
  { name: '线形马凳筋方向', value: '平行横向受力筋' },
  { name: '拉筋', value: '⌽6@450*450', tone: 'blue' },
  { name: '拉筋数量计算方式', value: '向上取整+1' },
  { name: '马凳筋数量计算方', value: '向上取整+1' },
  { name: '筏板侧面纵筋', value: '?', tone: 'blue' },
  { name: 'U形构造封边钢筋', value: '', tone: 'blue' },
  { name: 'U形构造封边钢筋', value: 'max(15*d,200)', tone: 'blue' },
  { name: '归类名称', value: '?' },
  { name: '汇总信息', value: '筏板基础' },
  { name: '备注', value: '' },
  { name: '显示样式', value: '', tone: 'gray' },
]

const PanelTitle: React.FC<{ title: string; active?: boolean }> = ({ title, active }) => (
  <div
    className={`flex h-4 shrink-0 items-center border text-[13px] leading-[14px] ${
      active ? 'border-[#0054e3] bg-[#0054e3] text-white' : 'border-[#8a8a8a] bg-[#f0f0f0] text-black'
    }`}
  >
    <h2 className="flex-1 whitespace-nowrap">{title}</h2>
    <button type="button" aria-label="固定" className="mr-2 flex h-3 w-3 items-center justify-center">
      <svg viewBox="0 0 10 10" className="h-[10px] w-[10px]" fill="none" stroke="currentColor">
        <path d="M3 6V1h4v5M6.500 1v5M1.500 6h7M5 6v4" />
      </svg>
    </button>
    <button type="button" aria-label="关闭" className="mr-0.5 flex h-3 w-3 items-center justify-center">
      <svg viewBox="0 0 8 8" className="h-2 w-2" stroke="currentColor">
        <path d="M0 0l8 8M8 0L0 8" />
      </svg>
    </button>
  </div>
)

const Chevron: React.FC<{ open?: boolean }> = ({ open }) => (
  <svg viewBox="0 0 9 9" className="h-[9px] w-[9px] shrink-0" fill="none" aria-hidden="true">
    {open ? (
      <path d="M.8 2.500l3.700 3.700 3.700-3.700" stroke="#333" strokeWidth="1.7" />
    ) : (
      <path d="M3 .8l3.500 3.700L3 8.200" stroke="#9a9a9a" strokeWidth="1.5" />
    )}
  </svg>
)

const Elbow: React.FC<{ last?: boolean }> = ({ last }) => (
  <svg viewBox="0 0 12 16" className="h-4 w-3 shrink-0" stroke="#707070" strokeDasharray="1 1" aria-hidden="true">
    <path d={last ? 'M.5 0v9' : 'M.5 0v16'} />
    <path d="M1 8.5h11" />
  </svg>
)

const NavTree: React.FC = () => (
  <ul className="min-h-0 flex-1 overflow-hidden border border-[#828790] bg-white pt-px text-xs leading-4">
    {tree.map((group, groupIndex) => (
      <li key={group.label + groupIndex}>
        <div className="flex h-4 items-center">
          <span className="ml-[7px] flex"><Chevron open={!!group.items} /></span>
          <span className="ml-1 w-[3px] border-t border-dotted border-[#808080]" />
          <Icon name={group.items ? 'folderOpen' : 'folder'} />
          <span className="ml-[5px]">{group.label}</span>
          {group.isNew && (
            <>
              <svg viewBox="0 0 15 15" className="ml-[5px] h-[15px] w-[15px]" fill="none" aria-hidden="true">
                <rect x=".5" y=".5" width="14" height="14" fill="#e9f4fd" stroke="#4d7da8" />
                <path d="M3 3h3v9H3zM9 3h3v9H9zM3 5.500h3M9 5.500h3M3 8h3M9 8h3" stroke="#2d8ad0" />
              </svg>
              <span className="mb-2 ml-0.5 h-2 bg-[#ffe600] font-['Liberation_Sans',sans-serif] text-[9px] leading-2 font-bold">NEW</span>
            </>
          )}
        </div>
        {group.items && (
          <ul className={`ml-3 border-l border-dotted pl-[18px] ${group.isNew ? 'border-transparent' : 'border-[#808080]'}`}>
            {group.items.map(([label, icon], index) => (
              <li key={label} className="flex h-4 items-center">
                <Elbow last={index === group.items!.length - 1} />
                <span
                  className={`flex h-4 items-center gap-1 pr-1 ${
                    group.label === '基础' && label === '筏板基础(M)' ? 'bg-[#d9d9d9]' : ''
                  }`}
                >
                  <Icon name={icon} />
                  {label}
                </span>
              </li>
            ))}
          </ul>
        )}
      </li>
    ))}
  </ul>
)

const NavButton: React.FC<{ label: string }> = ({ label }) => (
  <button
    type="button"
    className="h-[22px] shrink-0 border border-t-white border-r-[#8c8c8c] border-b-[#8c8c8c] border-l-white bg-[#f0f0f0] text-center text-xs leading-5"
  >
    {label}
  </button>
)

const ModuleNav: React.FC = () => (
  <aside className="flex w-[289px] shrink-0 flex-col pr-px">
    <PanelTitle title="模块导航栏" active />
    <div className="mt-px flex flex-col">
      <NavButton label="工程设置" />
      <NavButton label="绘图输入" />
    </div>
    <div className="flex h-[27px] shrink-0 items-center gap-2 bg-gradient-to-b from-[#fcfcfc] to-[#f1f1f1] pl-[7px]">
      <button type="button" aria-label="全部展开">
        <svg viewBox="0 0 16 16" className="h-4 w-4">
          <path d="M3 1h3v3h3v3H6v3H3V7H0V4h3z" fill="#111" />
          <path d="M10 7h3v3h3v3h-3v3h-3v-3H7v-3h3z" fill="#111" />
          <path d="M4.500 2v7M1 5.500h7M11.500 8v7M8 11.500h7" stroke="#1fb5a5" />
        </svg>
      </button>
      <button type="button" aria-label="全部折叠">
        <svg viewBox="0 0 16 16" className="h-4 w-4">
          <path d="M0 4h8v3H0zM7 10h9v3H7z" fill="#111" />
          <path d="M1 5.500h6M8 11.500h7" stroke="#1fb5a5" />
        </svg>
      </button>
    </div>
    <div className="ml-0.5 flex min-h-0 flex-1 flex-col">
      <NavTree />
    </div>
    <div className="mt-px flex flex-col">
      <NavButton label="单构件输入" />
      <NavButton label="报表预览" />
    </div>
  </aside>
)

const ComponentList: React.FC = () => (
  <section className="flex flex-col">
    <PanelTitle title="构件列表" />
    <div className="flex h-7 items-center pl-[2px]">
      <Tool label="新建" icon="create" arrow="narrow" />
      <button type="button" aria-label="删除" className="ml-0.5"><Icon name="remove" /></button>
      <button type="button" aria-label="复制" className="ml-2"><Icon name="duplicate" /></button>
    </div>
    <div className="flex h-6 items-center">
      <input
        aria-label="搜索构件"
        placeholder="搜索构件..."
        className="h-6 w-0 flex-1 border border-[#828790] bg-white pb-1 pl-0.5 placeholder:text-[#8a8a8a] outline-none"
      />
      <button type="button" aria-label="搜索" className="flex h-6 w-[26px] items-center justify-center">
        <Icon name="search" />
      </button>
    </div>
    <ul className="mt-px h-[200px] border border-[#828790] bg-white pt-px text-xs leading-4">
      <li className="flex h-4 items-center">
        <span className="ml-2 flex"><Chevron open /></span>
        <span className="ml-1 w-1 border-t border-dotted border-[#808080]" />
        <Icon name="slab" />
        <span className="ml-1">筏板基础</span>
      </li>
      {['FB-400', 'FB-2000', 'FB-450', 'FB-700'].map((name, index) => (
        <li key={name} className="flex h-4 items-center pl-8">
          <Elbow last={index === 3} />
          <span className={`-ml-1 flex h-4 items-center gap-1 px-1 ${index === 0 ? 'bg-[#316ac5]' : ''}`}>
            <Icon name="gear" />
            {name}
          </span>
        </li>
      ))}
    </ul>
  </section>
)

const DrawingManager: React.FC = () => (
  <section className="mt-[5px] flex flex-col">
    <PanelTitle title="图纸管理" />
    <div className="flex items-end" role="tablist">
      <button type="button" role="tab" aria-selected="true" className="h-[21px] border border-b-0 border-[#dcdcdc] bg-white px-[7px]">
        图纸文件列表
      </button>
      <button type="button" role="tab" aria-selected="false" className="h-[19px] border border-b-0 border-[#d0d0d0] bg-[#f0f0f0] px-[3px]">
        图纸楼层对照表
      </button>
    </div>
    <div className="mr-px h-[242px] border border-[#dcdcdc] bg-white py-[3px] pr-0.5 pl-1">
      <div className="flex h-6 items-center border-b border-[#a0a0a0]">
        <button type="button" className="h-[22px] border border-[#a0a0a0] bg-[#f2f2f2] px-1">添加图纸</button>
        <button type="button" aria-label="添加图纸选项" className="-ml-px flex h-[22px] w-[13px] items-center justify-center border border-[#a0a0a0] bg-[#f2f2f2]">
          <Caret />
        </button>
        <button type="button" className="-ml-px h-[22px] border border-[#a0a0a0] bg-[#f2f2f2] px-1">整理图纸</button>
        <button type="button" className="ml-auto h-[22px] w-3 border border-[#a0a0a0] bg-[#f2f2f2] text-sm leading-3">»</button>
      </div>
      <div className="mt-px flex h-[209px] flex-col border border-[#8f8f8f] p-px">
        <div className="flex-1 overflow-hidden">
          <table className="w-full table-fixed border-collapse text-xs">
            <colgroup>
              <col className="w-5" />
              <col />
              <col className="w-3" />
            </colgroup>
            <thead>
              <tr className="h-[26px]">
                <th className="border border-[#c0c0c0] bg-gradient-to-b from-white to-[#efefef]" />
                <th className="border border-[#c0c0c0] bg-gradient-to-b from-[#fad9a0] to-[#f2c066] font-normal text-[#660066]">图纸名称</th>
                <th className="overflow-hidden border border-[#c0c0c0] font-normal whitespace-nowrap">图</th>
              </tr>
            </thead>
            <tbody className="leading-4">
              <tr className="h-[19px]">
                <td className="border border-[#c0c0c0] text-center">1</td>
                <td className="truncate border border-[#c0c0c0] pl-5">地下室底板_t3</td>
                <td className="border border-[#c0c0c0] pl-0.5">1</td>
              </tr>
              <tr className="h-[19px]">
                <td className="border border-[#c0c0c0] bg-[#ffd280] text-center text-[#660066]">2</td>
                <td className="overflow-hidden bg-[#008020] pl-5 whitespace-nowrap outline-2 -outline-offset-2 outline-[#808080]">地下室底板（含各栋基</td>
                <td className="border border-[#c0c0c0] bg-[#008020] pl-0.5">1</td>
              </tr>
            </tbody>
          </table>
        </div>
        <div className="flex h-[15px] shrink-0 items-center bg-[#f0f0f0] px-1">
          <svg viewBox="0 0 9 9" className="h-[9px] w-[9px]" fill="none"><path d="M6 .8L2.500 4.500 6 8.200" stroke="#444" strokeWidth="1.7" /></svg>
          <span className="ml-1 h-full w-[17px] bg-[#cdcdcd]" />
          <svg viewBox="0 0 9 9" className="ml-auto h-[9px] w-[9px]" fill="none"><path d="M3 .8l3.500 3.700L3 8.200" stroke="#444" strokeWidth="1.7" /></svg>
        </div>
      </div>
    </div>
  </section>
)

const CadLayers: React.FC = () => (
  <section className="mt-2 flex min-h-0 flex-1 flex-col">
    <PanelTitle title="CAD图层显示" />
    <div className="flex-1 border border-[#828790] bg-white pt-0.5">
      {['已提取的CAD图层', 'CAD原始图层'].map((layer) => (
        <label key={layer} className="flex h-[14px] items-center text-xs leading-[14px]">
          <span className="ml-[9px] flex"><Chevron /></span>
          <span className="ml-1 w-1 border-t border-dotted border-[#808080]" />
          <input type="checkbox" className="mr-0.5 h-3 w-[13px] appearance-none border border-[#333] bg-white" />
          {layer}
        </label>
      ))}
    </div>
  </section>
)

const ring = { fill: 'none', stroke: '#ffffff', strokeOpacity: 0.55 }
const axis = { stroke: '#00a000', strokeWidth: 1 }

const Viewport: React.FC = () => (
  <svg
    viewBox="493 168 1085 819"
    preserveAspectRatio="xMidYMid slice"
    className="min-h-0 w-full flex-1 bg-black font-['Liberation_Sans',sans-serif]"
    role="img"
    aria-label="三维视图"
  >
    <path d="M493 168H867L986 280L1123 412L1343 620L1578 841V987H493z" fill="#0073e6" />
    <path d="M493 478L869 386L1047 339L1123 412L950 455L943 462L493 570z" fill="#00e800" />
    <path d="M493 568L943 460L950 454L1123 411.5V413.5L951 457L944 463L493 571z" fill="#00a80c" />
    <path d="M635 168h11L873 385L867 386z" fill="#004f99" />
    <path d="M867 386l6-1L952 457L944 462z" fill="#009000" />
    <path d="M944 462L952 457L1236 730L1508 987H1500L1227 730z" fill="#004f99" />
    <g {...axis}>
      <path d="M892 168L1011 280L1368 620L1578 818M1050 168L1528 620L1578 667" fill="none" />
      <path d="M1270 550.5L1543 484M1304 583L1578 516M1253 531L1328 561M1287 562L1362 592" />
      <circle cx="1556" cy="481" r="13" fill="none" />
      <circle cx="1565" cy="519" r="13" fill="none" />
    </g>
    <g {...ring}>
      <circle cx="1035.5" cy="577.5" r="364" />
      <circle cx="1035.5" cy="213.5" r="23" />
      <circle cx="1399.5" cy="577.5" r="23" />
      <circle cx="671.5" cy="577.5" r="23" />
      <circle cx="1035.5" cy="941.5" r="23" />
    </g>
    <g fill="#fff" textAnchor="middle">
      <text x="1556" y="486" fontSize="14">P</text>
      <text x="1565" y="524" fontSize="14">N</text>
      <text transform="translate(984 200) rotate(-90)" fontSize="16">7400</text>
      <text transform="translate(1355 551) rotate(-90)" fontSize="16">350</text>
    </g>
    <path d="M1077 568h1v1h-1zM1283 764h1v1h-1z" fill="#000" />
    <path d="M548 938L565 908" stroke="#007fff" strokeWidth="4" />
    <path d="M569 901l1 10-8-4z" fill="#007fff" />
    <path d="M561 896h8l-8 9h8" stroke="#007fff" fill="none" />
    <path d="M548 937L522 912" stroke="#00ff00" strokeWidth="4" />
    <path d="M515 906l10 2-5 8z" fill="#00ff00" />
    <path d="M524 904l5 4 5-4M529 908v6" stroke="#00ff00" fill="none" />
    <path d="M548 938L571 931" stroke="#ff0000" strokeWidth="4" />
    <path d="M577 931l-7-3 2 7z" fill="#ff0000" />
    <path d="M558 917l8 9M566 917l-8 9" stroke="#ff0000" fill="none" />
  </svg>
)

const NumberField: React.FC<{ label: string; value: string; className: string }> = ({ label, value, className }) => (
  <span className={`relative flex h-[23px] shrink-0 items-center ${className}`}>
    <input
      aria-label={label}
      defaultValue={value}
      disabled
      className="h-full w-full border border-[#7a7a7a] bg-[#f4f4f4] pr-[18px] text-right text-[#7a7a7a]"
    />
    <svg viewBox="0 0 6 15" className="pointer-events-none absolute right-1 h-[15px] w-1.5" fill="#555" aria-hidden="true">
      <path d="M0 3l3-3 3 3zM0 12h6l-3 3z" />
    </svg>
  </span>
)

const Workspace: React.FC = () => (
  <main className="flex min-w-0 flex-1 flex-col">
    <div className="flex h-[27px] shrink-0 items-start pl-px">
      <Group className="pr-[5px]">
        <Grip />
        {editTools.map((tool) => <Tool key={tool.label} {...tool} />)}
      </Group>
    </div>
    <div className="flex h-[29px] shrink-0 items-start pl-px">
      <Group className="pr-[5px]">
        <Grip />
        <Combo label="楼层" value="基础层" className="ml-px w-[58px]" />
        <Combo label="构件分类" value="基础" className="ml-0.5 w-[70px]" />
        <Combo label="构件类型" value="筏板基础" className="ml-0.5 w-[70px]" />
        <Combo label="构件" value="FB-400" className="ml-0.5 w-[70px]" />
        <span className="mx-[3px] h-4 w-px bg-[#b4b4b4]" />
        {componentTools.map((tool) => <Tool key={tool.label} {...tool} />)}
      </Group>
      <Group className="ml-[70px] pr-0.5">
        <Grip />
        {axisTools.map((tool) => <Tool key={tool.label} {...tool} />)}
      </Group>
    </div>
    <div className="flex h-7 shrink-0 items-start pl-px">
      <Group className="min-w-0 flex-1 pr-1">
        <Grip />
        {drawTools.map((tool) => <Tool key={tool.label} {...tool} />)}
        <Combo label="画弧半径" value="" className="mr-0.5 w-[54px]" />
        {slabTools.map((tool) => <Tool key={tool.label} {...tool} />)}
        <button type="button" aria-label="更多" className="mb-3 ml-auto text-base leading-4">»</button>
      </Group>
      <Group className="ml-0.5">
        <Grip />
        <span className="h-[25px] w-6 rounded bg-gradient-to-r from-white to-[#ededed]" />
      </Group>
    </div>
    <Viewport />
    <div className="flex h-[31px] shrink-0 items-center gap-0.5 pl-px">
      <Group>
        <Grip />
        {modeTools.map((tool) => <Tool key={tool.label} {...tool} />)}
      </Group>
      <Group>
        <Grip />
        {snapTools.map((tool) => <Tool key={tool.label} {...tool} />)}
      </Group>
      <Group>
        <Grip />
        <Combo label="偏移方式" value="不偏移" className="w-[58px]" />
        <span className="mx-1 h-4 w-px bg-[#b4b4b4]" />
        <span className="mr-0.5 text-[#7a7a7a]">X=</span>
        <NumberField label="X" value="0" className="w-[59px]" />
        <span className="mx-0.5 text-[#7a7a7a]">mm Y=</span>
        <NumberField label="Y" value="0" className="w-[59px]" />
        <span className="ml-0.5 text-[#7a7a7a]">mm</span>
        <span className="mx-1 h-4 w-px bg-[#b4b4b4]" />
        <label className="flex items-center gap-2">
          <input type="checkbox" className="h-[11px] w-[11px] appearance-none border border-[#999] bg-white" />
          旋转
        </label>
        <span className="w-1" />
        <NumberField label="旋转角度" value="0.000" className="w-[69px]" />
        <span className="mx-0.5 text-[#7a7a7a]">º</span>
      </Group>
    </div>
  </main>
)

const PropertyEditor: React.FC = () => (
  <aside className="flex w-[337px] shrink-0 flex-col font-['Noto_Sans_Mono_CJK_SC','Noto_Sans_CJK_SC',monospace]">
    <PanelTitle title="属性编辑器" />
    <div className="flex-1 border border-[#a0a0a0] bg-white pr-0.5">
      <table className="w-full table-fixed border-collapse text-xs leading-4">
        <colgroup>
          <col className="w-[22px]" />
          <col className="w-[121px]" />
          <col />
        </colgroup>
        <thead>
          <tr className="h-[23px]">
            <th className="border border-[#c0c0c0] bg-gradient-to-b from-white to-[#efefef]" />
            <th className="border border-[#c0c0c0] bg-gradient-to-b from-white to-[#efefef] font-normal">属性名称</th>
            <th className="border border-[#c0c0c0] bg-gradient-to-b from-[#fad9a0] to-[#f2c066] font-normal text-[#660066]">属性值</th>
          </tr>
        </thead>
        <tbody>
          {properties.map((prop, index) => (
            <tr key={index} className="h-[19px]">
              <td
                className={`border border-[#c0c0c0] text-center ${
                  index === 0 ? 'bg-[#ffd280] text-[#660066]' : 'bg-gradient-to-b from-white to-[#efefef]'
                }`}
              >
                {index + 1}
              </td>
              <td
                className={`border border-[#c0c0c0] whitespace-nowrap ${index === 18 ? 'pl-0.5' : 'pl-[19px]'} ${
                  index === 0 ? 'bg-[#0078d7] text-white' : ''
                } ${prop.tone === 'blue' ? 'text-[#0000ff]' : ''} ${prop.tone === 'gray' ? 'text-[#808080]' : ''}`}
              >
                <span className="flex items-center">
                  {index === 18 && (
                    <button type="button" aria-label="展开" className="mr-[5px] h-3 w-3 border border-[#999] text-black">
                      <svg viewBox="0 0 10 10" stroke="currentColor"><path d="M2 5h6M5 2v6" /></svg>
                    </button>
                  )}
                  {prop.name}
                </span>
              </td>
              <td className={`border border-[#c0c0c0] pl-px whitespace-nowrap ${index === 0 ? 'bg-[#d9eaf9]' : ''}`}>
                {prop.value}
              </td>
            </tr>
          ))}
        </tbody>
      </table>
    </div>
  </aside>
)

const TitleBar: React.FC = () => (
  <header className="relative flex h-[23px] shrink-0 items-center bg-white pl-0.5">
    <svg viewBox="0 0 16 16" className="h-4 w-4" fill="none" aria-hidden="true">
      <rect width="16" height="16" rx="3" fill="#1593e8" />
      <path d="M8 2.500v11M8 5.500H5a2.500 2.500 0 0 0 0 5h1.500M8 8h4.500M11 5.500l2 2.500-2 2.500M6 4l2-2 2 2" stroke="#fff" strokeWidth="1.3" />
    </svg>
    <h1 className="ml-[5px] whitespace-pre">
      广联达BIM钢筋算量软件<span className="text-[13px]"> GGJ2013 - [C:\Users\Administrator\Desktop\</span>高弘地下室\高弘花园地下室<span className="text-[13px]">.GGJ12]</span>
    </h1>
    <div className="mr-5 ml-auto flex items-center gap-9">
      <button type="button" aria-label="最小化"><svg viewBox="0 0 10 10" className="h-[10px] w-[10px]" stroke="#000"><path d="M0 5.500h10" /></svg></button>
      <button type="button" aria-label="还原">
        <svg viewBox="0 0 10 10" className="h-[10px] w-[10px]" fill="none" stroke="#000"><path d="M.5 2.500h7v7h-7zM2.500 2.500v-2h7v7h-2" /></svg>
      </button>
      <button type="button" aria-label="关闭"><svg viewBox="0 0 10 10" className="h-[10px] w-[10px]" stroke="#000"><path d="M0 0l10 10M10 0L0 10" /></svg></button>
    </div>
    <span className="absolute top-0 right-[490px] h-px w-[290px] bg-[#c4c4c4] shadow-[0_1px_3px_#b0b0b0]" />
  </header>
)

const MenuBar: React.FC = () => (
  <nav className="flex h-[31px] shrink-0 items-center pb-px pl-[7px]">
    <div className="flex gap-[11px]">
      {menus.map((menu) => (
        <button key={menu} type="button" className="whitespace-nowrap">{menu}</button>
      ))}
    </div>
    <span className="w-2.5" />
    <Tool label="新建变更" icon="change" arrow="wide" />
    <Tool label="广小二" icon="robot" />
    <div className="ml-auto flex h-[27px] w-[187px] items-center justify-center bg-gradient-to-b from-[#fbfbfb] to-[#f2f2f2]">
      <a href="#help" className="text-[#0b6a6a]">如何快速布置自定义范..</a>
    </div>
    <div className="mr-0.5 ml-1 flex h-[27px] items-center bg-gradient-to-b from-[#fbfbfb] to-[#f2f2f2]">
      <Tool label="13450234365" icon="user" arrow="wide" />
      <span className="w-1" />
      <Tool label="造价豆:0" />
      <Tool label="" icon="bell" />
      <Tool label="我要建议" icon="feedback" />
    </div>
  </nav>
)

const MainToolbar: React.FC = () => (
  <div className="flex h-[30px] shrink-0 items-start">
    <Group className="h-7">
      <button type="button" aria-label="新建" className="mx-1"><Icon name="newFile" /></button>
      <button type="button" aria-label="打开" className="mx-1"><Icon name="open" /></button>
      <button type="button" aria-label="最近文件" className="flex w-3 justify-center"><Caret /></button>
      <button type="button" aria-label="保存" className="mx-1"><Icon name="save" /></button>
      <span className="mr-0.5 h-6 w-px bg-[#a0a0a0]" />
      <button type="button" aria-label="撤销" className="mx-1"><Icon name="undo" /></button>
      <button type="button" aria-label="撤销列表" className="flex w-3 justify-center"><Caret /></button>
      <button type="button" aria-label="恢复" className="mx-1"><Icon name="redo" /></button>
      <button type="button" aria-label="恢复列表" className="flex w-3 justify-center"><Caret muted /></button>
    </Group>
    <Group className="ml-1 h-7">
      {mainTools.map((tool) => <Tool key={tool.label} {...tool} />)}
    </Group>
    <Group className="ml-1 h-7">
      {viewTools.map((tool) => <Tool key={tool.label} {...tool} />)}
    </Group>
  </div>
)

const StatusBar: React.FC = () => (
  <footer className="relative mt-0.5 flex h-5 shrink-0 items-stretch gap-0.5 bg-[#f6f6f6] font-['Noto_Sans_Mono_CJK_SC','Noto_Sans_CJK_SC',monospace] text-xs leading-[18px]">
    <span className="w-[148px] border border-[#d4d4d4] pl-px">X=163892 Y=70004</span>
    <span className="w-[78px] border border-[#d4d4d4] pl-px">层高:0.45m</span>
    <span className="w-[98px] border border-[#d4d4d4] pl-px">底标高:-11.375m</span>
    <span className="w-12 border border-[#d4d4d4] pl-px">2</span>
    <span className="flex-1 border border-[#d4d4d4]" />
    <span className="w-[70px] border border-[#d4d4d4]">279.7 FPS</span>
    <div className="absolute right-[78px] bottom-0 flex items-end">
      <svg viewBox="0 0 28 27" className="z-10 -mr-1 h-[27px] w-7" fill="none" aria-hidden="true">
        <path d="M1 4L22 0l5 22-21 5z" fill="#f04e1e" />
        <path d="M20 6c-6-1-11 1-10 4s9 2 9 6-7 5-11 3" stroke="#fff" strokeWidth="3.2" />
      </svg>
      <span className="flex h-[23px] w-[27px] items-center justify-center border border-[#b7cfe6] bg-white font-['Noto_Sans_CJK_SC',sans-serif] text-[15px] font-bold text-[#1a6fc4]">中</span>
    </div>
  </footer>
)

const FloatingWidgets: React.FC = () => (
  <>
    <span className="absolute top-[297px] -right-[33px] h-11 w-11 rounded-full bg-[#cffcf8]" />
    <div className="absolute top-[409px] right-0 flex h-[59px] w-[10px] items-end justify-center rounded-l-sm border border-[#2b303a] bg-[#434a56] pb-1">
      <svg viewBox="0 0 3 44" className="h-11 w-[3px]">
        <path d="M1.500 0v14" stroke="#e2b93b" strokeWidth="3" strokeDasharray="1 1" />
        <path d="M1.500 14v30" stroke="#38a5d8" strokeWidth="3" strokeDasharray="1 1" />
      </svg>
    </div>
    <div className="absolute top-[658px] -right-[29px] flex h-[47px] w-[47px] items-center rounded-full border-2 border-[#d8d8d8] bg-gradient-to-b from-[#2fae50] to-[#52d46c] pl-0.5 text-xs font-bold text-white shadow-md inset-ring-2 inset-ring-[#1f9a45]">
      74
    </div>
  </>
)

const App: React.FC = () => (
  <div className="relative flex h-screen flex-col overflow-hidden bg-[#f0f0f0] font-['Open_Sans','Noto_Sans_CJK_SC',sans-serif] text-xs leading-4 text-black">
    <TitleBar />
    <MenuBar />
    <MainToolbar />
    <div className="flex min-h-0 flex-1 pr-0.5">
      <div className="flex font-['Noto_Sans_Mono_CJK_SC','Noto_Sans_CJK_SC',monospace]">
        <ModuleNav />
        <div className="mr-[3px] ml-1 flex w-[197px] shrink-0 flex-col">
          <ComponentList />
          <DrawingManager />
          <CadLayers />
        </div>
      </div>
      <Workspace />
      <span className="w-[3px] shrink-0" />
      <PropertyEditor />
    </div>
    <StatusBar />
    <div className="flex h-2 shrink-0 bg-gradient-to-r from-[#0c3050] via-[#08294a] to-[#04213c]">
      <span className="mt-1 ml-[78px] h-1 w-2 rounded-t-full bg-[#d9a400]" />
      <span className="ml-[652px] w-12 bg-[#0a5291]" />
    </div>
    <FloatingWidgets />
  </div>
)

export default App
